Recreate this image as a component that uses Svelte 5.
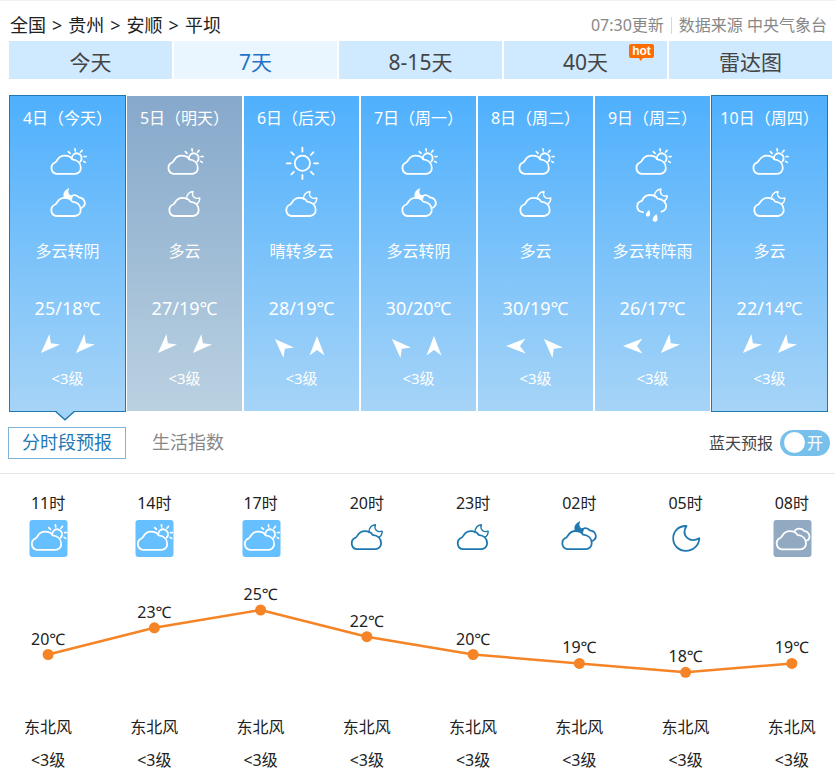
<script lang="ts">
	type Icon = 'sun' | 'cloudyDay' | 'cloudyNight' | 'overcast' | 'overcastNight' | 'showerNight' | 'moon';

	interface Day {
		date: string;
		icons: Icon[];
		text: string;
		temp: string;
		winds: number[];
		level: string;
		gray?: boolean;
		framed?: boolean;
	}

	interface Hour {
		time: string;
		icon: Icon;
		tile: '' | 'blue' | 'gray';
		temp: number;
		wind: string;
		level: string;
	}

	const crumbs = ['全国', '贵州', '安顺', '平坝'];
	const tabs = ['今天', '7天', '8-15天', '40天', '雷达图'];

	// winds are the headings of the two arrows, in degrees
	const days: Day[] = [
		{ date: '4日（今天）', icons: ['cloudyDay', 'overcastNight'], text: '多云转阴', temp: '25/18℃', winds: [225, 225], level: '<3级', framed: true },
		{ date: '5日（明天）', icons: ['cloudyDay', 'cloudyNight'], text: '多云', temp: '27/19℃', winds: [225, 225], level: '<3级', gray: true },
		{ date: '6日（后天）', icons: ['sun', 'cloudyNight'], text: '晴转多云', temp: '28/19℃', winds: [315, 0], level: '<3级' },
		{ date: '7日（周一）', icons: ['cloudyDay', 'overcastNight'], text: '多云转阴', temp: '30/20℃', winds: [315, 0], level: '<3级' },
		{ date: '8日（周二）', icons: ['cloudyDay', 'cloudyNight'], text: '多云', temp: '30/19℃', winds: [270, 315], level: '<3级' },
		{ date: '9日（周三）', icons: ['cloudyDay', 'showerNight'], text: '多云转阵雨', temp: '26/17℃', winds: [270, 225], level: '<3级' },
		{ date: '10日（周四）', icons: ['cloudyDay', 'cloudyNight'], text: '多云', temp: '22/14℃', winds: [225, 225], level: '<3级', framed: true }
	];

	const hours: Hour[] = [
		{ time: '11时', icon: 'cloudyDay', tile: 'blue', temp: 20, wind: '东北风', level: '<3级' },
		{ time: '14时', icon: 'cloudyDay', tile: 'blue', temp: 23, wind: '东北风', level: '<3级' },
		{ time: '17时', icon: 'cloudyDay', tile: 'blue', temp: 25, wind: '东北风', level: '<3级' },
		{ time: '20时', icon: 'cloudyNight', tile: '', temp: 22, wind: '东北风', level: '<3级' },
		{ time: '23时', icon: 'cloudyNight', tile: '', temp: 20, wind: '东北风', level: '<3级' },
		{ time: '02时', icon: 'overcastNight', tile: '', temp: 19, wind: '东北风', level: '<3级' },
		{ time: '05时', icon: 'moon', tile: '', temp: 18, wind: '东北风', level: '<3级' },
		{ time: '08时', icon: 'overcast', tile: 'gray', temp: 19, wind: '东北风', level: '<3级' }
	];

	let activeTab = $state(1);
	let selected = $state(0);
	let panel = $state(0);
	let blueSky = $state(true);

	const maxTemp = Math.max(...hours.map((h) => h.temp));
	const points = hours.map((h, i) => ({
		x: ((i + 0.5) / hours.length) * 100,
		y: 40 + (maxTemp - h.temp) * 8.9,
		temp: h.temp
	}));

	const CLOUD =
		'M9.2 30.8A6 6 0 0 1 8.2 19.3C10.4 18.2 10.6 12.7 17.4 12.7C21.4 12.7 23.8 14.1 25.1 16.4C30.4 16.8 33.7 20.2 33.7 24.9A5.8 5.8 0 0 1 28 30.8Z';
</script>

{#snippet weather(icon: Icon, tile = '', small = false)}
	<svg class="icon" viewBox="0 0 40 40" fill="none" stroke="currentColor" stroke-width="1.8" stroke-linecap="round" stroke-linejoin="round" aria-hidden="true">
		{#if tile}
			<rect class="tile-{tile}" x="1.5" y="1" width="38" height="37" rx="3" stroke="none" />
		{/if}
		{#if icon === 'sun'}
			<circle cx="20.4" cy="20.3" r="7.6" />
			<path d="M20.4 4.6v4M20.4 32v4M4.7 20.3h4M32.1 20.3h4M9.3 9.2l2.6 2.6M28.9 28.8l2.6 2.6M9.3 31.4l2.6-2.6M28.9 11.8l2.6-2.6" />
		{:else if icon === 'cloudyDay'}
			<g transform={small ? 'translate(-.5 0)' : 'translate(-.9 0)'}>
				<path d={CLOUD} />
				<path d="M24.8 15.8A4.9 4.9 0 1 1 33.2 18.6" />
				<path stroke-width="1.7" d="M21.2 8.6l1.8 1.7M27.9 5.9l.3 2M35 7.4l-1.6 1.8M37 13.7l2-.2M36.6 18.4l1.6 1" />
			</g>
		{:else if icon === 'cloudyNight'}
			<g transform={small ? 'translate(.4 -.6)' : 'translate(0 2.2)'}>
				<path d={CLOUD} />
				<path stroke-width="1.4" d="M21.6 14.2C21.2 9.6 24.3 6.6 28 6.2C26.3 10.8 29.6 14.4 34.8 12.8C34.8 15.6 33.6 17.7 31.5 18.9" />
			</g>
		{:else if icon === 'overcastNight'}
			<g transform={small ? 'translate(-1 -.7)' : 'translate(-1 2.2)'}>
				<path d={CLOUD} />
				<path d="M22.8 12.5C24.6 9.4 29.2 8.8 31.8 12.1C38.4 12.9 39.8 19.8 34.8 22.5" />
				<path stroke-width=".8" fill="currentColor" d="M21.5 3.7C16.9 5.1 15.9 9.6 17.6 13.1C20.5 12.7 23.3 13.8 24.3 15.3L25.5 10.9C21.8 10.7 20 7.3 21.5 3.7Z" />
			</g>
		{:else if icon === 'showerNight'}
			<g transform="translate(-.7 0)">
				<path d="M10.7 29.1C3.2 28.6 3.1 19.2 9.6 17.8C11.4 13.6 14.2 11.9 18 12C21.8 12 24 13.5 25.3 15.6C35.2 16.8 36.6 26.7 29.1 28.7" />
				<path stroke-width="1.4" d="M22.2 13.6C21.8 9.4 24.9 6.4 28.6 6C26.9 10.6 30.2 14.2 35 12.6C35 15.2 34 17 31.9 18.2" />
				<path stroke="none" fill="currentColor" d="M16.9 27C18.1 29.8 18.5 33.6 15.5 33.6C12.4 33.6 13.2 29.7 16.9 27ZM24 31C25.4 34.2 26.2 38.8 22.8 38.8C19 38.8 20 34 24 31Z" />
			</g>
		{:else if icon === 'overcast'}
			<g transform="translate(.3 -.5)">
				<path d={CLOUD} />
				<path d="M22.3 12.6C24.2 9.2 29.7 9.3 31.6 12.4C37.8 13.2 38.8 20.4 34.6 22" />
			</g>
		{:else}
			<path transform="translate(-.3 0)" d="M20.8 7C11.9 6.7 7.2 13.4 7.5 20C7.8 26.9 13.3 31.8 20 31.8C27.7 31.8 33.3 26.3 33.6 19.2C24.5 24.6 14.7 16.8 20.8 7Z" />
		{/if}
	</svg>
{/snippet}

<main class="forecast">
	<header class="top">
		<nav class="crumbs" aria-label="位置">
			{#each crumbs as crumb, i}
				{#if i > 0}<span>&gt;</span>{/if}
				<a href="#{crumb}">{crumb}</a>
			{/each}
		</nav>
		<p class="source"><span>07:30更新</span><i></i><span>数据来源 中央气象台</span></p>
	</header>

	<nav class="tabs">
		{#each tabs as tab, i}
			<a href="#tab{i}" class:active={activeTab === i} onclick={() => (activeTab = i)}>
				{tab}
				{#if i === 3}
					<svg class="hot" viewBox="0 0 25 18">
						<path fill="#ff6c00" d="M2 1H23Q25 1 25 3V13Q25 15 23 15H14L11.5 18L10 15H2Q0 15 0 13V3Q0 1 2 1Z" />
						<text x="12.5" y="12" text-anchor="middle">hot</text>
					</svg>
				{/if}
			</a>
		{/each}
	</nav>

	<section class="days">
		{#each days as day, i}
			<button class="day" class:gray={day.gray} class:framed={day.framed} onclick={() => (selected = i)}>
				<span class="date">{day.date}</span>
				{#each day.icons as icon}
					{@render weather(icon)}
				{/each}
				<span class="text">{day.text}</span>
				<span class="temp">{day.temp}</span>
				<span class="winds">
					{#each day.winds as heading}
						<svg viewBox="0 0 20 20" aria-hidden="true">
							<path transform="rotate({heading} 10 10)" fill="currentColor" d="M10 0L17.5 19.5L10 14L2.5 19.5Z" />
						</svg>
					{/each}
				</span>
				<span class="level">{day.level}</span>
				{#if selected === i}
					<svg class="pointer" viewBox="0 0 20 10" aria-hidden="true">
						<path fill="#a3d2f7" d="M1 0H19L10 8.5Z" />
						<path fill="none" stroke="#1f78b0" stroke-width="1.5" d="M1 .7L10 8.7L19 .7" />
					</svg>
				{/if}
			</button>
		{/each}
	</section>

	<div class="panels">
		<button class:current={panel === 0} onclick={() => (panel = 0)}>分时段预报</button>
		<button class:current={panel === 1} onclick={() => (panel = 1)}>生活指数</button>
		<label class="switch">
			<span>蓝天预报</span>
			<input type="checkbox" bind:checked={blueSky} />
			<span class="track"><b></b>{blueSky ? '开' : '关'}</span>
		</label>
	</div>

	<section class="hourly">
		<div class="row">
			{#each hours as hour}
				<div class="hour">
					<span class="time">{hour.time}</span>
					<span class="hour-icon" class:tiled={hour.tile}>
						{@render weather(hour.icon, hour.tile, true)}
					</span>
				</div>
			{/each}
		</div>

		<svg class="chart" role="img" aria-label="气温">
			{#each points.slice(1) as point, i}
				<line x1="{points[i].x}%" y1={points[i].y} x2="{point.x}%" y2={point.y} />
			{/each}
			{#each points as point}
				<circle cx="{point.x}%" cy={point.y} r="5.5" />
				<text x="{point.x}%" y={point.y - 10} text-anchor="middle">{point.temp}℃</text>
			{/each}
		</svg>

		<div class="row">
			{#each hours as hour}
				<div class="hour wind">
					<span>{hour.wind}</span>
					<span>{hour.level}</span>
				</div>
			{/each}
		</div>
	</section>
</main>

<style>
	:global(body) {
		background: #fff;
	}

	.forecast {
		overflow: hidden;
		border-top: 1px solid #f0f0f6;
		color: #222;
		font-family: 'Noto Sans', 'Noto Sans CJK SC', sans-serif;
		font-size: 16px;
	}

	a {
		color: inherit;
		text-decoration: none;
	}

	button {
		padding: 0;
		border: 0;
		background: none;
		font: inherit;
		cursor: pointer;
	}

	.top {
		display: flex;
		justify-content: space-between;
		align-items: center;
		height: 40px;
		padding: 8px 8px 0 10px;
		box-sizing: border-box;
	}

	.crumbs {
		display: flex;
		gap: 6px;
		font-size: 18px;
		line-height: 28px;
	}

	.source {
		display: flex;
		align-items: center;
		gap: 7px;
		margin: 0;
		color: #888;
		line-height: 28px;
	}

	.source i {
		width: 1px;
		height: 17px;
		background: #c9d9ee;
	}

	.tabs {
		display: grid;
		grid-template-columns: repeat(5, 1fr);
		gap: 2px;
		padding: 0 3px 0 9px;
	}

	.tabs a {
		position: relative;
		height: 38px;
		background: #cfe9ff;
		color: #444;
		font-size: 21px;
		line-height: 42px;
		text-align: center;
	}

	.tabs a.active {
		background: #eaf6ff;
		color: #1e73c8;
	}

	.hot {
		position: absolute;
		top: 2px;
		right: 13px;
		width: 25px;
		height: 18px;
	}

	.hot text {
		fill: #fff;
		font-family: 'Liberation Sans', sans-serif;
		font-size: 12px;
		font-weight: 700;
	}

	.days {
		display: grid;
		grid-template-columns: repeat(7, 1fr);
		padding: 16px 7px 0 9px;
	}

	.day {
		position: relative;
		display: flex;
		flex-direction: column;
		align-items: center;
		height: 317px;
		border: 1px solid transparent;
		background: linear-gradient(#4fb0fd, #a6d4f7) padding-box;
		color: #fff;
	}

	.day.gray {
		background: linear-gradient(#86a8cb, #bad1e1) padding-box;
	}

	.day.framed {
		border-color: #1f78b0;
	}

	.date {
		height: 44px;
		margin-bottom: 3px;
		line-height: 44px;
		white-space: nowrap;
	}

	.icon {
		display: block;
		flex: none;
		width: 40px;
		height: 40px;
	}

	.text {
		height: 30px;
		margin-top: 13px;
		line-height: 30px;
	}

	.temp {
		height: 30px;
		margin-top: 27px;
		font-size: 18px;
		line-height: 30px;
	}

	.winds {
		display: flex;
		gap: 15px;
		margin-top: 13px;
		padding-right: 5px;
	}

	.winds svg {
		width: 20px;
		height: 20px;
		overflow: visible;
	}

	.level {
		margin-top: 12px;
		font-size: 15px;
		line-height: 20px;
	}

	.pointer {
		position: absolute;
		bottom: -10px;
		left: 45px;
		width: 20px;
		height: 10px;
	}

	.panels {
		display: flex;
		align-items: center;
		height: 61px;
		padding: 0 5px 0 8px;
		border-bottom: 1px solid #e6e6e6;
	}

	.panels button {
		height: 32px;
		padding: 0 13px;
		border: 1px solid transparent;
		color: #888;
		font-size: 18px;
		line-height: 29px;
	}

	.panels button + button {
		margin-left: 12px;
	}

	.panels .current {
		border-color: #7fb3d8;
		color: #1f78b4;
	}

	.switch {
		position: relative;
		display: flex;
		align-items: center;
		gap: 7px;
		margin-left: auto;
		color: #444;
		line-height: 26px;
		cursor: pointer;
	}

	.switch input {
		position: absolute;
		right: 0;
		opacity: 0;
	}

	.track {
		display: flex;
		align-items: center;
		gap: 2px;
		width: 50px;
		height: 26px;
		padding-left: 4px;
		border-radius: 13px;
		background: #78c0ec;
		box-sizing: border-box;
		color: #fff;
	}

	.track b {
		width: 21px;
		height: 21px;
		border-radius: 50%;
		background: #fff;
	}

	/* the outer columns run slightly past the page edges */
	.hourly {
		margin: 0 -10px 0 -5px;
		padding-top: 17px;
	}

	.row {
		display: grid;
		grid-template-columns: repeat(8, 1fr);
	}

	.hour {
		display: flex;
		flex-direction: column;
		align-items: center;
	}

	.time {
		height: 28px;
		line-height: 24px;
	}

	.hour-icon {
		color: #1f78b0;
	}

	.hour-icon.tiled {
		color: #fff;
	}

	.tile-blue {
		fill: #66bfff;
	}

	.tile-gray {
		fill: #92a9c2;
	}

	.chart {
		display: block;
		width: 100%;
		height: 140px;
		margin-top: 11px;
	}

	.chart line {
		stroke: #f58426;
		stroke-width: 2.5px;
	}

	.chart circle {
		fill: #f58426;
	}

	.chart text {
		fill: #222;
		font-size: 16px;
	}

	.wind {
		height: 60px;
		padding-top: 1px;
		line-height: 33px;
	}

	.wind span {
		height: 33px;
	}
</style>
